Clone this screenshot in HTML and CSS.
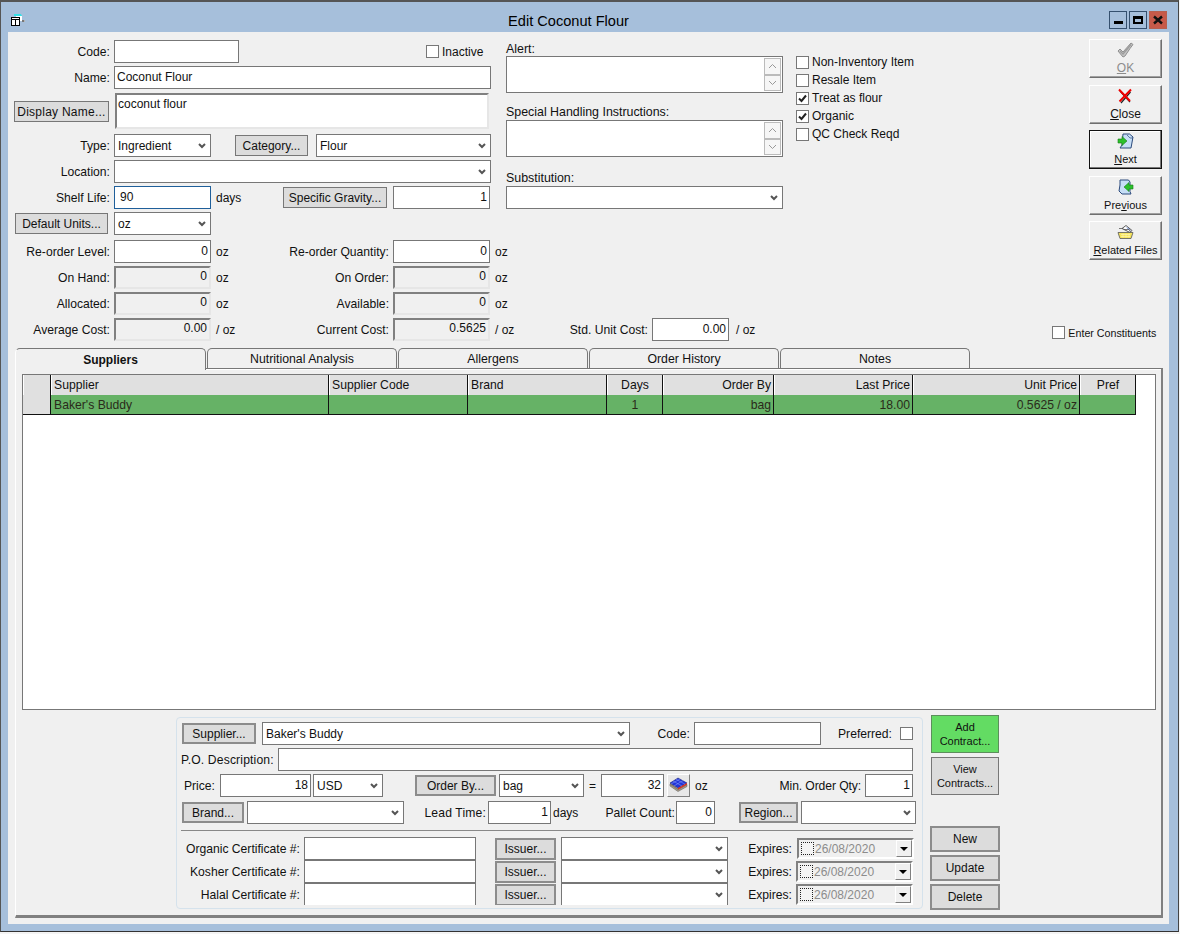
FILE: index.html
```html
<!DOCTYPE html>
<html>
<head>
  <meta charset="UTF-8">
  <title>Edit Coconut Flour</title>
  <link rel="stylesheet" href="styles.css">
</head>
<body>
<div class="window">
  <div class="titlebar">
    <svg class="app-icon" width="16" height="12" viewBox="0 0 16 12">
      <path d="M3 0h7l1 2H3z" fill="#35e0e6"/>
      <path d="M5 2h6v5H5z" fill="#fff"/>
      <rect x="0.500" y="3.500" width="8" height="8" fill="#fff" stroke="#000"/>
      <path d="M0.500 5.500h8M4.500 5.500v6" stroke="#000"/>
      <rect x="11" y="6" width="2" height="2" fill="#777"/>
      <rect x="13" y="6" width="1" height="2" fill="#b5b5b5"/>
    </svg>
    <div class="title">Edit Coconut Flour</div>
    <div class="win-buttons">
      <div class="win-btn"><span class="glyph-min"></span></div>
      <div class="win-btn"><span class="glyph-max"></span></div>
      <div class="win-btn win-close">
        <svg width="10" height="10" viewBox="0 0 10 10"><path d="M1 1.500l8 7M9 1.500l-8 7" stroke="#111" stroke-width="2.400"/></svg>
      </div>
    </div>
  </div>

  <div class="content">
    <div class="upper">
      <div class="col-left">
        <div class="row">
          <label class="lbl">Code:</label>
          <input class="fld w-code" type="text">
          <input class="chk chk-inactive" type="checkbox">
          <span class="chk-text">Inactive</span>
        </div>
        <div class="row row-name">
          <label class="lbl">Name:</label>
          <input class="fld w-name" type="text" value="Coconut Flour">
        </div>
        <div class="row row-display">
          <button class="btn btn-display">Display Name...</button>
          <textarea class="sunken-text">coconut flour</textarea>
        </div>
        <div class="row">
          <label class="lbl">Type:</label>
          <select class="sel w-97"><option>Ingredient</option></select>
          <button class="btn btn-category">Category...</button>
          <select class="sel w-flour"><option>Flour</option></select>
        </div>
        <div class="row">
          <label class="lbl">Location:</label>
          <select class="sel w-name"><option></option></select>
        </div>
        <div class="row">
          <label class="lbl">Shelf Life:</label>
          <input class="fld w-97 fld-focus" type="text" value="90">
          <span class="unit w-days">days</span>
          <button class="btn btn-gravity">Specific Gravity...</button>
          <input class="fld num w-97 ml-6" type="text" value="1">
        </div>
        <div class="row">
          <button class="btn btn-units">Default Units...</button>
          <select class="sel w-97 ml-6"><option>oz</option></select>
        </div>
      </div>

      <div class="col-mid">
        <div class="mid-label">Alert:</div>
        <div class="memo">
          <div class="spin">
            <div class="spin-btn"><svg width="9" height="6" viewBox="0 0 9 6"><path d="M1 5l3.500-3.500L8 5" fill="none" stroke="#999"/></svg></div>
            <div class="spin-btn"><svg width="9" height="6" viewBox="0 0 9 6"><path d="M1 1l3.500 3.500L8 1" fill="none" stroke="#999"/></svg></div>
          </div>
        </div>
        <div class="mid-label mid-special">Special Handling Instructions:</div>
        <div class="memo">
          <div class="spin">
            <div class="spin-btn"><svg width="9" height="6" viewBox="0 0 9 6"><path d="M1 5l3.500-3.500L8 5" fill="none" stroke="#999"/></svg></div>
            <div class="spin-btn"><svg width="9" height="6" viewBox="0 0 9 6"><path d="M1 1l3.500 3.500L8 1" fill="none" stroke="#999"/></svg></div>
          </div>
        </div>
        <div class="mid-label mid-subst">Substitution:</div>
        <select class="sel w-mid"><option></option></select>
      </div>

      <div class="col-checks">
        <div class="check-row"><input class="chk" type="checkbox"><span class="chk-text">Non-Inventory Item</span></div>
        <div class="check-row"><input class="chk" type="checkbox"><span class="chk-text">Resale Item</span></div>
        <div class="check-row"><input class="chk" type="checkbox" checked><span class="chk-text">Treat as flour</span></div>
        <div class="check-row"><input class="chk" type="checkbox" checked><span class="chk-text">Organic</span></div>
        <div class="check-row"><input class="chk" type="checkbox"><span class="chk-text">QC Check Reqd</span></div>
      </div>

      <div class="col-actions">
        <button class="act act-ok">
          <svg width="17" height="16" viewBox="0 0 17 16"><path d="M1 9l2-2 3 3 8-9 2 1.500-3 4-5 7.500-2 1z" fill="#c4c4c4" stroke="#8f8f8f" stroke-width="1"/><path d="M3 9l3 3 8-9.500" fill="none" stroke="#9c9c9c" stroke-width="1.400"/></svg>
          <span class="act-big"><u>O</u>K</span>
        </button>
        <button class="act">
          <svg width="17" height="16" viewBox="0 0 17 16"><path d="M3 3l10 11M13.500 4L4 15" stroke="#222" stroke-width="1.200"/><path d="M2 1.500l11 11.500M14 1.500L2.500 13.500" stroke="#f00000" stroke-width="2"/></svg>
          <span class="act-big"><u>C</u>lose</span>
        </button>
        <button class="act act-default">
          <svg width="17" height="16" viewBox="0 0 17 16"><path d="M6 1h6.500L16 4l-2 11H3l2-3z" fill="#c6def6" stroke="#2c4a7c" stroke-width="1"/><path d="M10 2l3 3h3" fill="none" stroke="#2c4a7c" stroke-width=".7"/><path d="M1 6h4V3.500L10 8l-5 4.500V10H1z" fill="#2cc02c" stroke="#1a7a1a" stroke-width=".6"/></svg>
          <span class="act-small"><u>N</u>ext</span>
        </button>
        <button class="act">
          <svg width="17" height="16" viewBox="0 0 17 16"><path d="M3 1h8.500l1.500 2v9.500l1 2.500H5L2 12l1-6z" fill="#c6def6" stroke="#2c4a7c" stroke-width="1"/><path d="M16 6h-4V3.500L7 8l5 4.500V10h4z" fill="#2cc02c" stroke="#1a7a1a" stroke-width=".6"/></svg>
          <span class="act-small">Pre<u>v</u>ious</span>
        </button>
        <button class="act">
          <svg width="17" height="15" viewBox="0 0 17 15"><path d="M5 4l4-3 6 5-2 2z" fill="#fff" stroke="#333" stroke-width=".8"/><path d="M10 3l3 3" stroke="#3a66c4"/><path d="M2 4h4l1 1h5l2 3" fill="none" stroke="#555" stroke-width=".8"/><path d="M1 8h15l-2 6H3z" fill="#f6e45c" stroke="#555" stroke-width=".8"/><path d="M4 10h9M4 12h9M6 9v4M9 9v4M12 9v4" stroke="#fff7b8" stroke-width=".6"/></svg>
          <span class="act-small"><u>R</u>elated Files</span>
        </button>
      </div>
    </div>

    <div class="stats">
      <div class="row">
        <label class="lbl">Re-order Level:</label>
        <input class="fld num w-97" type="text" value="0">
        <span class="unit w-unit">oz</span>
        <label class="lbl lbl-2">Re-order Quantity:</label>
        <input class="fld num w-97" type="text" value="0">
        <span class="unit">oz</span>
      </div>
      <div class="row">
        <label class="lbl">On Hand:</label>
        <input class="ro num w-97" type="text" value="0" readonly>
        <span class="unit w-unit">oz</span>
        <label class="lbl lbl-2">On Order:</label>
        <input class="ro num w-97" type="text" value="0" readonly>
        <span class="unit">oz</span>
      </div>
      <div class="row">
        <label class="lbl">Allocated:</label>
        <input class="ro num w-97" type="text" value="0" readonly>
        <span class="unit w-unit">oz</span>
        <label class="lbl lbl-2">Available:</label>
        <input class="ro num w-97" type="text" value="0" readonly>
        <span class="unit">oz</span>
      </div>
      <div class="row">
        <label class="lbl">Average Cost:</label>
        <input class="ro num w-97" type="text" value="0.00" readonly>
        <span class="unit w-unit">/ oz</span>
        <label class="lbl lbl-2">Current Cost:</label>
        <input class="ro num w-97" type="text" value="0.5625" readonly>
        <span class="unit w-cost-unit">/ oz</span>
        <label class="lbl lbl-std">Std. Unit Cost:</label>
        <input class="fld num w-std" type="text" value="0.00">
        <span class="unit unit-std">/ oz</span>
        <div class="constituents">
          <input class="chk" type="checkbox"><span class="chk-small">Enter Constituents</span>
        </div>
      </div>
    </div>

    <div class="tabs">
      <div class="tab tab-active">Suppliers</div>
      <div class="tab">Nutritional Analysis</div>
      <div class="tab">Allergens</div>
      <div class="tab">Order History</div>
      <div class="tab">Notes</div>
    </div>

    <div class="panel">
      <div class="list">
        <table class="grid">
          <colgroup>
            <col class="c-head"><col class="c-supplier"><col class="c-139"><col class="c-139"><col class="c-56"><col class="c-order"><col class="c-139"><col class="c-unit"><col class="c-56">
          </colgroup>
          <tr class="grid-head">
            <th></th><th>Supplier</th><th>Supplier Code</th><th>Brand</th><th class="mid">Days</th><th class="right">Order By</th><th class="right">Last Price</th><th class="right">Unit Price</th><th class="mid">Pref</th>
          </tr>
          <tr class="grid-row">
            <th></th><td>Baker's Buddy</td><td></td><td></td><td class="mid">1</td><td class="right">bag</td><td class="right">18.00</td><td class="right">0.5625 / oz</td><td></td>
          </tr>
        </table>
      </div>

      <div class="lower">
        <div class="sub">
          <div class="row sub-row">
            <button class="btn btn-thick b-supplier">Supplier...</button>
            <select class="sel w-supplier"><option>Baker's Buddy</option></select>
            <label class="lbl l-code">Code:</label>
            <input class="fld w-subcode" type="text">
            <label class="lbl l-pref">Preferred:</label>
            <input class="chk chk-pref" type="checkbox">
          </div>
          <div class="row sub-row">
            <label class="lbl l-po">P.O. Description:</label>
            <input class="fld w-po" type="text">
          </div>
          <div class="row sub-row row-price">
            <label class="lbl l-price">Price:</label>
            <input class="fld num w-price" type="text" value="18">
            <select class="sel w-usd"><option>USD</option></select>
            <button class="btn btn-thick b-orderby">Order By...</button>
            <select class="sel w-bag"><option>bag</option></select>
            <span class="equals">=</span>
            <input class="fld num w-63" type="text" value="32">
            <button class="stack-btn">
              <svg width="19" height="16" viewBox="0 0 19 16">
                <path d="M1 8l8 5.500 9-5v2l-9 5-8-5.500z" fill="#a89c88" stroke="#555" stroke-width=".5"/>
                <path d="M1 7l8 5.500 9-5v1.500l-9 5-8-5.500z" fill="#8a7c68"/>
                <path d="M1 7l8-5 9 5-9 5z" fill="#2234d8" stroke="#10186a" stroke-width=".5"/>
                <path d="M9 12l9-5v1.500l-9 5z" fill="#e0301e"/>
                <path d="M4 5l9 5M7 3.200l9 5M14 4.500l-9 5.500M11 3l-9 5" stroke="#8fa4ff" stroke-width=".5"/>
              </svg>
            </button>
            <span class="unit w-oz">oz</span>
            <label class="lbl l-min">Min. Order Qty:</label>
            <input class="fld num w-min" type="text" value="1">
          </div>
          <div class="row sub-row">
            <button class="btn btn-thick b-brand">Brand...</button>
            <select class="sel w-brand"><option></option></select>
            <label class="lbl l-lead">Lead Time:</label>
            <input class="fld num w-63" type="text" value="1">
            <span class="unit w-leaddays">days</span>
            <label class="lbl l-pallet">Pallet Count:</label>
            <input class="fld num w-pallet" type="text" value="0">
            <button class="btn btn-thick b-region">Region...</button>
            <select class="sel w-region"><option></option></select>
          </div>
          <div class="divider"></div>
          <div class="certs">
            <div class="cert-row">
              <label class="lbl l-cert">Organic Certificate #:</label>
              <input class="fld w-cert" type="text">
              <button class="btn btn-thick b-issuer">Issuer...</button>
              <select class="sel w-issuer"><option></option></select>
              <label class="lbl l-exp">Expires:</label>
              <div class="date date-first">
                <span class="date-box"></span><span class="date-text">26/08/2020</span><span class="date-drop"></span>
              </div>
            </div>
            <div class="cert-row">
              <label class="lbl l-cert">Kosher Certificate #:</label>
              <input class="fld w-cert" type="text">
              <button class="btn btn-thick b-issuer">Issuer...</button>
              <select class="sel w-issuer"><option></option></select>
              <label class="lbl l-exp">Expires:</label>
              <div class="date">
                <span class="date-box"></span><span class="date-text">26/08/2020</span><span class="date-drop"></span>
              </div>
            </div>
            <div class="cert-row">
              <label class="lbl l-cert">Halal Certificate #:</label>
              <input class="fld w-cert" type="text">
              <button class="btn btn-thick b-issuer">Issuer...</button>
              <select class="sel w-issuer"><option></option></select>
              <label class="lbl l-exp">Expires:</label>
              <div class="date">
                <span class="date-box"></span><span class="date-text">26/08/2020</span><span class="date-drop"></span>
              </div>
            </div>
          </div>
        </div>

        <div class="side">
          <button class="btn side-add">Add<br>Contract...</button>
          <button class="btn side-view">View<br>Contracts...</button>
          <button class="btn btn-thick side-new">New</button>
          <button class="btn btn-thick side-act">Update</button>
          <button class="btn btn-thick side-act">Delete</button>
        </div>
      </div>
    </div>
  </div>
</div>
</body>
</html>
```

FILE: styles.css
```css
* {
  box-sizing: border-box;
}

body {
  margin: 0;
  padding: 0;
  background-color: #f4f4f4;
  font-family: "Liberation Sans", Arial, sans-serif;
  font-size: 12px;
  color: #111;
}

input, select, textarea, button {
  font-family: inherit;
  font-size: 12px;
  color: #111;
  margin: 0;
  border-radius: 0;
  outline: none;
}

/* window frame */
.window {
  width: 1179px;
  height: 932px;
  background-color: #a6bfdb;
  border-top: 2px solid #555;
  border-left: 1px solid #555;
  border-right: 1px solid #444;
  border-bottom: 1px solid #333;
  padding: 0 9px 7px 7px;
}

.titlebar {
  height: 30px;
  display: flex;
  align-items: flex-start;
}

.app-icon {
  margin: 12px 1px 0 3px;
  flex: none;
}

.title {
  flex: 1;
  text-align: center;
  font-size: 14.600px;
  line-height: 38px;
  color: #000;
}

.win-buttons {
  display: flex;
  gap: 2px;
  margin-top: 9px;
  margin-right: 2px;
}

.win-btn {
  width: 18px;
  height: 18px;
  border: 1px solid #35506e;
  display: flex;
  align-items: center;
  justify-content: center;
}

.win-close {
  background-color: #c75a4a;
  border-color: #b7604f;
}

.glyph-min {
  width: 9px;
  height: 3px;
  margin-top: 5px;
  background-color: #000;
}

.glyph-max {
  width: 10px;
  height: 8px;
  border: 2px solid #000;
  border-top-width: 3px;
}

.content {
  height: 892px;
  background-color: #f0f0f0;
  padding: 8px 0 0 0;
  overflow: hidden;
}

/* top form */
.upper {
  display: flex;
  height: 200px;
}

.col-left {
  width: 483px;
  flex: none;
}

.row {
  display: flex;
  align-items: center;
  height: 23px;
  margin-bottom: 3px;
}

.row-name {
  margin-bottom: 4px;
}

.row-display {
  height: 36px;
  margin-bottom: 5px;
}

.lbl {
  width: 102px;
  margin-right: 4px;
  text-align: right;
  white-space: nowrap;
  flex: none;
  font-size: 12.150px;
}

.fld, .sel {
  height: 23px;
  border: 1px solid #777;
  background-color: #fff;
  padding: 0 2px 2px;
  flex: none;
}

.sel {
  appearance: none;
  padding: 0 16px 0 3px;
  background-image: url("data:image/svg+xml,%3Csvg xmlns='http://www.w3.org/2000/svg' width='8' height='6'%3E%3Cpath d='M1 1l3 3 3-3' fill='none' stroke='%23555' stroke-width='2'/%3E%3C/svg%3E");
  background-repeat: no-repeat;
  background-position: right 4px center;
}

.num {
  text-align: right;
}

.fld-focus {
  border-color: #1f5f9a;
  padding-left: 5px;
}

.ro {
  height: 23px;
  border: 2px solid;
  border-color: #808080 #e6e6e6 #e6e6e6 #808080;
  background-color: #f0f0f0;
  padding: 0 2px 4px;
  flex: none;
}

.sunken-text {
  width: 374px;
  height: 36px;
  margin-left: 6px;
  resize: none;
  overflow: hidden;
  border: 2px solid;
  border-color: #808080 #e6e6e6 #e6e6e6 #808080;
  background-color: #fff;
  padding: 2px 1px 0;
  line-height: 15px;
}

.btn {
  height: 21px;
  background-color: #dcdcdc;
  border: 1px solid #777;
  padding: 0;
  flex: none;
  white-space: nowrap;
}

.btn-thick {
  border: 2px solid #8c8c8c;
}

.btn-display {
  width: 95px;
  margin-left: 6px;
  padding-top: 2px;
  letter-spacing: 0.250px;
}

.btn-category {
  width: 73px;
  margin-left: 24px;
}

.btn-gravity {
  width: 104px;
}

.btn-units {
  width: 93px;
  margin-left: 7px;
}

.w-code { width: 125px; }
.w-name { width: 377px; }
.w-97 { width: 97px; }
.w-flour { width: 175px; margin-left: 8px; }
.w-days { width: 67px; }
.ml-6 { margin-left: 6px; }

.unit {
  margin-left: 5px;
  white-space: nowrap;
  flex: none;
}

.chk {
  appearance: none;
  width: 13px;
  height: 13px;
  margin: 0;
  border: 1px solid #777;
  background-color: #fff;
  flex: none;
}

.chk:checked {
  background-image: url("data:image/svg+xml,%3Csvg xmlns='http://www.w3.org/2000/svg' width='11' height='11'%3E%3Cpath d='M2 5.500l2.500 2.500L9 2.500' fill='none' stroke='%23222' stroke-width='2'/%3E%3C/svg%3E");
  background-repeat: no-repeat;
  background-position: center;
}

.chk-text {
  margin-left: 3px;
  white-space: nowrap;
}

.chk-inactive {
  margin-left: 187px;
}

/* alert column */
.col-mid {
  width: 277px;
  margin-left: 15px;
  flex: none;
}

.mid-label {
  height: 16px;
  line-height: 18px;
  font-size: 12.400px;
}

.mid-special {
  margin-top: 11px;
  line-height: 16px;
}

.mid-subst {
  margin-top: 12px;
  height: 17px;
}

.memo {
  height: 37px;
  border: 1px solid #777;
  background-color: #fff;
  display: flex;
  justify-content: flex-end;
  padding: 1px 1px 1px 0;
}

.spin {
  width: 17px;
  display: flex;
  flex-direction: column;
}

.spin-btn {
  flex: 1;
  border: 1px solid #bbb;
  background-color: #f6f6f6;
  display: flex;
  align-items: center;
  justify-content: center;
}

.w-mid { width: 277px; }

.col-checks {
  margin-left: 13px;
  padding-top: 13px;
  width: 200px;
  flex: none;
}

.check-row {
  display: flex;
  align-items: center;
  height: 18px;
}

/* OK, Close, ... */
.col-actions {
  margin-left: 93px;
  width: 73px;
  flex: none;
  display: flex;
  flex-direction: column;
  gap: 6.500px;
  margin-top: -1px;
}

.act {
  width: 73px;
  height: 39px;
  flex: none;
  background-color: #f0f0f0;
  border: 1px solid;
  border-color: #fff #6f6f6f #6f6f6f #fff;
  box-shadow: inset -1px -1px 0 #a0a0a0;
  padding: 2px 0 0;
  font-size: 11px;
  display: flex;
  flex-direction: column;
  align-items: center;
  line-height: 14px;
}

.act svg {
  height: 16px;
  flex: none;
}

.act-big {
  font-size: 12px;
  margin-top: 3px;
}

.act-small {
  margin-top: 3px;
}

.act-ok {
  color: #8c8c8c;
}

.act-default {
  border: 1px solid #111;
  box-shadow: inset -1px -1px 0 #777, inset 1px 1px 0 #fff;
}

.stats .row:last-child {
  margin-bottom: 0;
}

.w-unit {
  width: 34px;
}

.lbl-2 {
  width: 139px;
}

.w-cost-unit {
  width: 73px;
}

.lbl-std {
  width: 80px;
  margin-right: 4px;
}

.w-std {
  width: 77px;
}

.unit-std {
  margin-left: 7px;
}

.constituents {
  margin-left: 297px;
  display: flex;
  align-items: center;
  padding-top: 6px;
  flex: none;
}

.chk-small {
  font-size: 10.700px;
  margin-left: 3px;
  white-space: nowrap;
}

/* tabs */
.tabs {
  display: flex;
  gap: 1px;
  height: 20px;
  margin: 7px 0 0 7px;
}

.tab {
  width: 190px;
  height: 21px;
  background-color: #f0f0f0;
  border: 1px solid #777;
  border-bottom: none;
  border-radius: 5px 5px 0 0;
  text-align: center;
  line-height: 20px;
  font-size: 12.300px;
}

.tab-active {
  position: relative;
  z-index: 2;
  width: 191px;
  height: 22px;
  font-weight: bold;
  line-height: 22px;
  border-left-color: #fff;
  border-top-color: #777;
  font-size: 12px;
}

.panel {
  position: relative;
  width: 1148px;
  height: 550px;
  margin-left: 7px;
  border-top: 1px solid #777;
  border-right: 2px solid #808080;
  border-bottom: 3px solid #808080;
  border-left: 1px solid #fff;
  padding-top: 5px;
  box-shadow: inset 0 1px 0 #fff;
}

.list {
  width: 1134px;
  height: 336px;
  margin-left: 6px;
  border: 1px solid #777;
  background-color: #fff;
}

.grid {
  border-collapse: separate;
  border-spacing: 0;
  table-layout: fixed;
  width: 1113px;
}

.c-head { width: 28px; }
.c-supplier { width: 278px; }
.c-139 { width: 139px; }
.c-56 { width: 56px; }
.c-order { width: 111px; }
.c-unit { width: 167px; }

.grid th, .grid td {
  font-weight: normal;
  text-align: left;
  padding: 0 2px 0 3px;
  border-right: 1px solid #111;
  white-space: nowrap;
  font-size: 12.200px;
}

.grid-head th {
  height: 20px;
  background-color: #e0e0e0;
  box-shadow: inset 1px 0 0 #fff;
}

.grid-row th, .grid-row td {
  height: 20px;
  border-bottom: 1px solid #111;
}

.grid-row th {
  background-color: #e0e0e0;
}

.grid-row td {
  background-color: #66b266;
  color: #2a2a1a;
}

.grid .mid { text-align: center; }
.grid .right { text-align: right; }

/* supplier detail */
.lower {
  display: flex;
  align-items: flex-start;
  margin-top: 5px;
  margin-left: 160px;
}

.sub {
  width: 747px;
  height: 192px;
  margin-top: 2px;
  border: 1px solid #d5e2ec;
  border-radius: 4px;
  padding: 4px 0 0 4px;
  flex: none;
}

.row-price {
  margin-bottom: 4px;
}

.b-supplier { width: 74px; margin-left: 1px; }
.w-supplier { width: 368px; margin-left: 6px; }
.l-code { width: 60px; }
.w-subcode { width: 127px; }
.l-pref { width: 71px; margin-right: 0; }
.chk-pref { margin-left: 8px; }

.l-po { width: 92px; margin-right: 0; letter-spacing: 0.150px; }
.w-po { width: 635px; margin-left: 5px; }

.l-price { width: 34px; margin-right: 0; }
.w-price { width: 91px; margin-left: 5px; }
.w-usd { width: 70px; margin-left: 2px; }
.b-orderby { width: 81px; margin-left: 32px; }
.w-bag { width: 85px; margin-left: 3px; }
.equals { width: 17px; padding-left: 5px; flex: none; }
.w-63 { width: 63px; }
.stack-btn {
  width: 23px;
  height: 23px;
  margin-left: 3px;
  padding: 0;
  background-color: #e8e8e8;
  border: 1px solid;
  border-color: #fff #808080 #808080 #fff;
  flex: none;
}
.w-oz { width: 30px; }
.l-min { width: 136px; letter-spacing: -0.100px; }
.w-min { width: 48px; }

.b-brand { width: 62px; margin-left: 1px; }
.w-brand { width: 157px; margin-left: 3px; }
.l-lead { width: 82px; margin-right: 2px; letter-spacing: 0.150px; }
.w-leaddays { width: 40px; margin-left: 2px; }
.l-pallet { width: 82px; margin-right: 1px; }
.w-pallet { width: 39px; }
.b-region { width: 59px; margin-left: 24px; }
.w-region { width: 115px; margin-left: 3px; }

.divider {
  width: 732px;
  height: 1px;
  margin: 6px 0;
  background-color: #888;
}

.certs {
  height: 68px;
  overflow: hidden;
}

.cert-row {
  display: flex;
  align-items: center;
  height: 23px;
}

.l-cert { width: 119px; }
.w-cert { width: 172px; }
.b-issuer { width: 61px; margin-left: 19px; height: 22px; }
.w-issuer { width: 167px; margin-left: 5px; }
.l-exp { width: 64px; margin-right: 4px; }

.date {
  width: 117px;
  height: 21px;
  display: flex;
  align-items: center;
  border: 2px solid;
  border-color: #808080 #fff #fff #808080;
  background-color: #f0f0f0;
  flex: none;
}

.date-first {
  margin-left: 1px;
}

.date-box {
  width: 13px;
  height: 13px;
  margin-left: 2px;
  background-color: #f4f4f4;
  border: 1px dotted #222;
  flex: none;
}

.date-text {
  color: #8c8c8c;
  margin-left: 1px;
  flex: 1;
}

.date-drop {
  width: 16px;
  height: 17px;
  background-color: #f0f0f0;
  border: 1px solid;
  border-color: #fff #808080 #808080 #fff;
  position: relative;
  flex: none;
}

.date-drop::after {
  content: "";
  position: absolute;
  left: 3px;
  top: 6px;
  border-left: 4px solid transparent;
  border-right: 4px solid transparent;
  border-top: 4px solid #000;
}

/* contract buttons */
.side {
  width: 70px;
  margin-left: 7px;
  display: flex;
  flex-direction: column;
  align-items: center;
  flex: none;
}

.side-add, .side-view {
  width: 68px;
  height: 38px;
  line-height: 14px;
  white-space: normal;
  font-size: 11px;
}

.side-add {
  background-color: #63dc63;
  border-color: #5c8f5c;
}

.side-view {
  margin-top: 4px;
}

.side-new, .side-act {
  width: 70px;
  height: 26px;
  font-size: 12px;
}

.side-new {
  margin-top: 31px;
}

.side-act {
  margin-top: 3px;
}
```
